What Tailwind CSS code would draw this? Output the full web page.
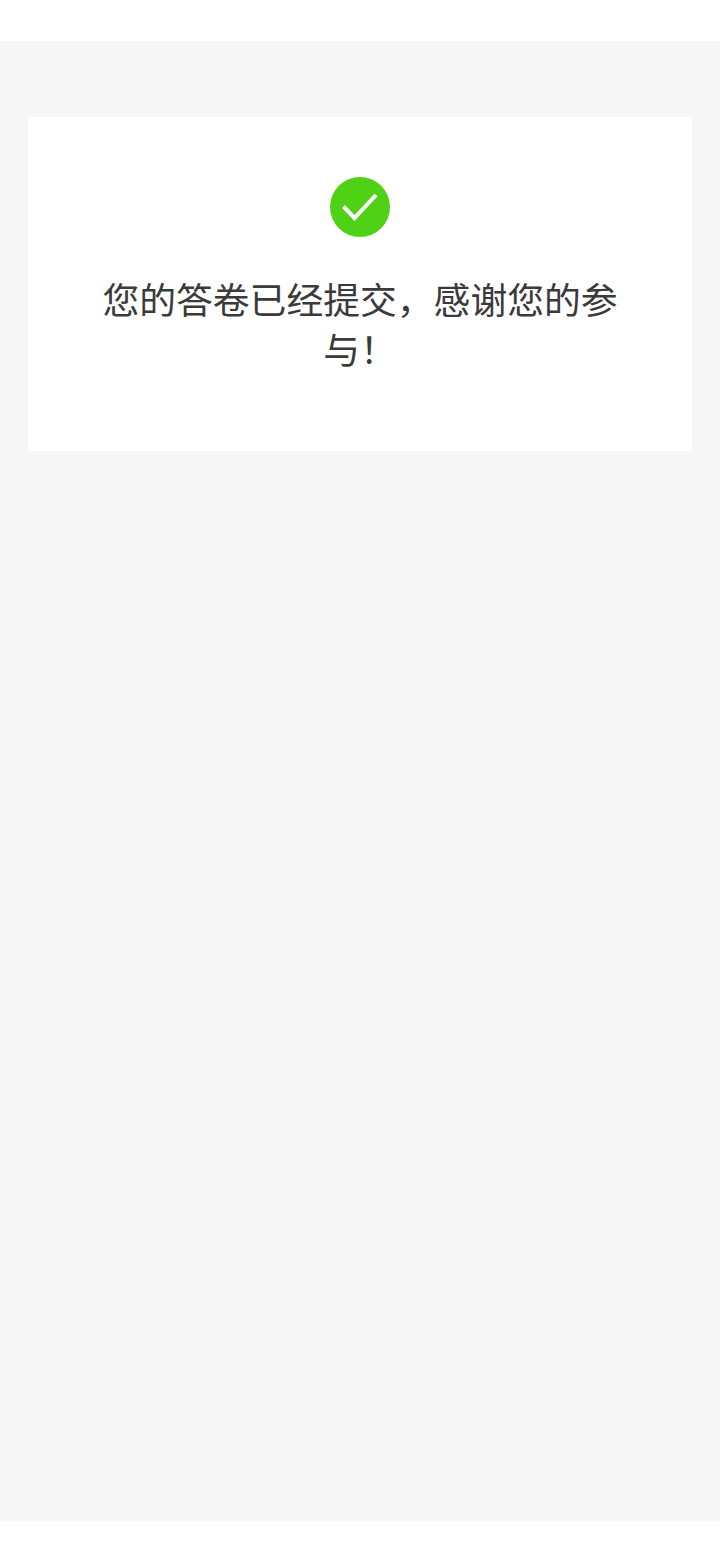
<!DOCTYPE html>
<html lang="zh-CN">
<head>
    <meta charset="UTF-8">
    <meta name="viewport" content="width=device-width, initial-scale=1.0">
    <title>提交成功</title>
    <script src="https://cdn.jsdelivr.net/npm/@tailwindcss/browser@4"></script>
</head>
<body class="bg-white font-['Noto_Sans_CJK_SC','Liberation_Sans',sans-serif]">
    <div class="h-[1560px] pt-[41px] pb-[39px]">
        <main class="h-full bg-[#f6f6f6] px-[28px] pt-[76px]">
            <!-- Result card -->
            <section class="h-[334px] bg-white px-[72px] pt-[60px] flex flex-col items-center">
                <svg class="w-[60px] h-[60px]" viewBox="0 0 60 60" aria-hidden="true">
                    <circle cx="30" cy="30" r="30" fill="#4fd115"/>
                    <path d="M13.5 29.5 L24.5 41 L46 18" fill="none" stroke="#fff" stroke-width="4"/>
                </svg>
                <p class="mt-[36px] w-full text-center text-[36.8px] leading-[50px] text-[#3a3a3a]">您的答卷已经提交，感谢您的参与！</p>
            </section>
        </main>
    </div>
</body>
</html>
